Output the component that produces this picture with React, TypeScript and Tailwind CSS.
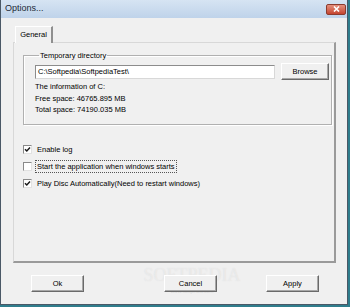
import React from 'react';

const font = { fontFamily: '"Liberation Sans", Arial, sans-serif' };

function ClassicButton({ label, className = '' }: { label: string; className?: string }) {
  return (
    <button
      className={`relative z-10 h-[17px] w-[53px] border border-t-white border-l-white border-r-[#6a6a6a] border-b-[#6a6a6a] bg-[#f0f0f0] text-[7.5px] text-black shadow-[inset_-1px_-1px_0_#a8a8a8] ${className}`}
    >
      {label}
    </button>
  );
}

function Check({ checked, label, focused = false }: { checked: boolean; label: string; focused?: boolean }) {
  return (
    <div className="flex h-[16px] items-center gap-[4px]">
      <span className="flex h-[9px] w-[9px] items-center justify-center border border-t-[#8a8a8a] border-l-[#8a8a8a] border-r-[#e2e2e2] border-b-[#e2e2e2] bg-white">
        {checked && (
          <svg width="7" height="7" viewBox="0 0 7 7">
            <path d="M1 3.2 L2.8 5 L6 1.6" fill="none" stroke="#1a1a1a" strokeWidth="1.5" />
          </svg>
        )}
      </span>
      <span className={`px-[1px] text-[7.5px] leading-[11px] ${focused ? 'outline outline-1 outline-dotted outline-[#555]' : ''}`}>
        {label}
      </span>
    </div>
  );
}

export default function App() {
  return (
    <div className="h-[307px] w-[350px] bg-[#2f7d8c]" style={font}>
      <div className="relative flex h-[305px] w-[348px] flex-col border-x border-b border-[#4a5866] bg-[#f0f0f0] text-black">
        {/* title bar */}
        <div className="flex h-[18px] items-center justify-between bg-gradient-to-b from-[#d6e4f3] to-[#bfd3ea] pl-[4px] pr-[1px]">
          <span className="text-[9px] text-[#1c2a38]">Options...</span>
          <div className="flex h-[11px] w-[20px] items-center justify-center rounded-[2px] border border-[#8c3b2e] bg-gradient-to-b from-[#e4907e] to-[#c4432e]">
            <svg width="7" height="6" viewBox="0 0 7 6">
              <path d="M1 0.5 L6 5.5 M6 0.5 L1 5.5" stroke="#fff" strokeWidth="1.6" />
            </svg>
          </div>
        </div>

        {/* tab header */}
        <div className="ml-[14px] mt-[8px] flex">
          <div className="z-10 -mb-px flex h-[17px] w-[38px] items-center justify-center border-l border-t border-r-2 border-l-white border-t-white border-r-[#8f8f8f] bg-[#f0f0f0] text-[7.5px]">
            General
          </div>
        </div>

        {/* tab panel */}
        <div className="ml-[12px] flex h-[221px] w-[323px] flex-col border-l border-t border-r-2 border-b-2 border-l-[#d8d8d8] border-t-[#d8d8d8] border-r-[#9a9a9a] border-b-[#9a9a9a] pl-[9px] pt-[7px]">
          <fieldset className="h-[75px] w-[309px] border border-[#b0b0b0] pl-[11px] shadow-[inset_1px_1px_0_#fff,1px_1px_0_#fff]">
            <legend className="ml-[4px] px-[1px] text-[7.5px] leading-[11px]">Temporary directory</legend>
            <div className="mt-[2px] flex items-center">
              <div className="flex h-[14px] w-[240px] items-center border border-t-[#8c8c8c] border-l-[#8c8c8c] border-r-[#d8d8d8] border-b-[#d8d8d8] bg-white pl-[2px] text-[7.5px]">
                C:\Softpedia\SoftpediaTest\
              </div>
              <ClassicButton label="Browse" className="ml-[6px] !w-[48px]" />
            </div>
            <div className="mt-[1px] text-[7.5px] leading-[11.5px]">
              <div>The information of C:</div>
              <div>Free space: 46765.895 MB</div>
              <div>Total space: 74190.035 MB</div>
            </div>
          </fieldset>

          <div className="mt-[16px] flex flex-col gap-[1px]">
            <Check checked label="Enable log" />
            <Check checked={false} focused label="Start the application when windows starts" />
            <Check checked label="Play Disc Automatically(Need to restart windows)" />
          </div>
        </div>

        {/* buttons */}
        <div className="ml-[30px] mt-[12px] flex">
          <ClassicButton label="Ok" />
          <ClassicButton label="Cancel" className="ml-[80px]" />
          <ClassicButton label="Apply" className="ml-[49px]" />
        </div>

        {/* watermark */}
        <div className="pointer-events-none absolute left-[146px] top-[266px] flex w-[90px] flex-col items-center leading-none">
          <span
            className="text-[18px] text-white/40 [text-shadow:0_0_1px_#dadada]"
            style={{ fontFamily: '"Liberation Serif", serif' }}
          >
            SOFTPEDIA
          </span>
          <span className="mt-[5px] text-[5px] text-[#d6d6d6]">www.softpedia.com</span>
        </div>
      </div>
    </div>
  );
}
